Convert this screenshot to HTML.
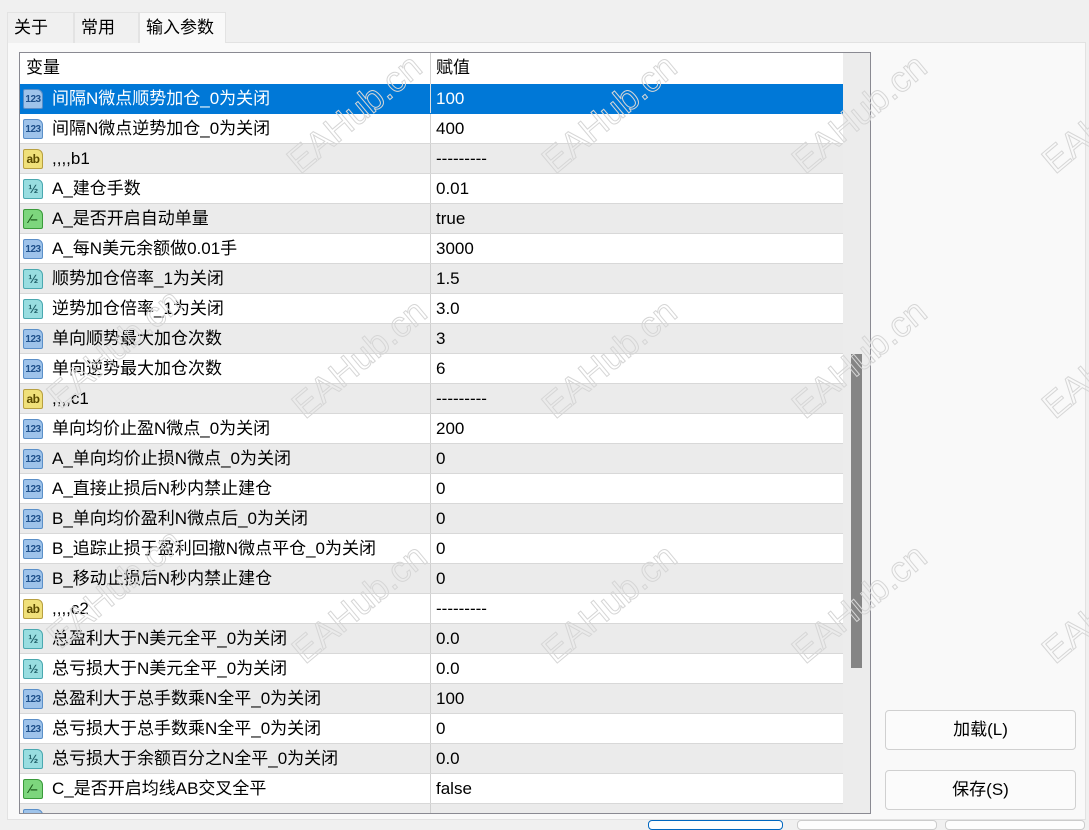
<!DOCTYPE html>
<html><head><meta charset="utf-8"><style>
*{margin:0;padding:0;box-sizing:border-box}
body{width:1089px;height:825px;background:#f0f0f0;font-family:"Liberation Sans","Noto Sans CJK SC",sans-serif;font-size:17px;color:#000;position:relative;overflow:hidden}
.tab{position:absolute;top:12px;height:31px;background:#f0f0f0;border:1px solid #e3e3e3;border-bottom:none;line-height:30px;padding-left:6px}
.panel{position:absolute;left:7px;top:42px;width:1079px;height:778px;background:#f9f9f9;border:1px solid #e2e2e2}
.list{position:absolute;left:19px;top:52px;width:852px;height:762px;border:1px solid #8a8a92;background:#fff;overflow:hidden}
.hdr{position:absolute;left:0;top:0;width:823px;height:31px;background:#fff}
.row{position:absolute;left:0;width:823px;height:30px;border-bottom:1px solid #d8d8d8}
.g{background:#ebebeb}.w{background:#fff}
.sel{background:#0078d7;color:#fff;border-bottom:1px solid #0078d7}
.n,.v{position:absolute;top:4px;height:22px;line-height:22px;white-space:nowrap;display:block;overflow:visible}
.n{left:32px}.v{left:416px}
.div{position:absolute;left:410px;top:0;width:1px;height:100%;background:#d0d0d0}
.ic{position:absolute;left:3px;top:5px;width:20px;height:20px;border-radius:2px 6px 2px 2px;font:bold 10px/19px "Liberation Sans",sans-serif;text-align:center;letter-spacing:-0.5px}
.i1{background:#9ec3ea;border:1px solid #5a8fc8;color:#1d4f8a}
.i2{background:#f0e07a;border:1px solid #b8a040;color:#5a4a00;font-size:12px}
.i3{background:#98dde0;border:1px solid #4aa8b0;color:#1d5d66;font-size:12px}
.i4{background:#7dd67d;border:1px solid #3a9a3a;color:#1a5a1a;font-size:12px}
.sb{position:absolute;left:823px;top:0;width:27px;height:100%;background:#ececec}
.th{position:absolute;left:8px;top:301px;width:11px;height:314px;background:#858585}
.btn{position:absolute;left:885px;width:191px;height:40px;border:1px solid #d0d0d0;border-radius:4px;background:#fbfbfb;text-align:center;line-height:38px}
</style></head><body>
<div class="panel"></div>
<div class="tab" style="left:7px;width:67px">关于</div>
<div class="tab" style="left:74px;width:65px">常用</div>
<div class="tab" style="left:139px;width:87px;background:#f9f9f9;height:31px">输入参数</div>
<div class="list">
<div class="hdr"><span class="n" style="left:6px">变量</span><span class="v">赋值</span><div class="div"></div></div>
<div class="row sel" style="top:31px"><div class="ic i1">123</div><span class="n">间隔N微点顺势加仓_0为关闭</span><span class="v">100</span><div class="div" style="background:#e0e0e0"></div></div>
<div class="row w" style="top:61px"><div class="ic i1">123</div><span class="n">间隔N微点逆势加仓_0为关闭</span><span class="v">400</span><div class="div"></div></div>
<div class="row g" style="top:91px"><div class="ic i2">ab</div><span class="n">,,,,b1</span><span class="v">---------</span><div class="div"></div></div>
<div class="row w" style="top:121px"><div class="ic i3">½</div><span class="n">A_建仓手数</span><span class="v">0.01</span><div class="div"></div></div>
<div class="row g" style="top:151px"><div class="ic i4">⁄‒</div><span class="n">A_是否开启自动单量</span><span class="v">true</span><div class="div"></div></div>
<div class="row w" style="top:181px"><div class="ic i1">123</div><span class="n">A_每N美元余额做0.01手</span><span class="v">3000</span><div class="div"></div></div>
<div class="row g" style="top:211px"><div class="ic i3">½</div><span class="n">顺势加仓倍率_1为关闭</span><span class="v">1.5</span><div class="div"></div></div>
<div class="row w" style="top:241px"><div class="ic i3">½</div><span class="n">逆势加仓倍率_1为关闭</span><span class="v">3.0</span><div class="div"></div></div>
<div class="row g" style="top:271px"><div class="ic i1">123</div><span class="n">单向顺势最大加仓次数</span><span class="v">3</span><div class="div"></div></div>
<div class="row w" style="top:301px"><div class="ic i1">123</div><span class="n">单向逆势最大加仓次数</span><span class="v">6</span><div class="div"></div></div>
<div class="row g" style="top:331px"><div class="ic i2">ab</div><span class="n">,,,,c1</span><span class="v">---------</span><div class="div"></div></div>
<div class="row w" style="top:361px"><div class="ic i1">123</div><span class="n">单向均价止盈N微点_0为关闭</span><span class="v">200</span><div class="div"></div></div>
<div class="row g" style="top:391px"><div class="ic i1">123</div><span class="n">A_单向均价止损N微点_0为关闭</span><span class="v">0</span><div class="div"></div></div>
<div class="row w" style="top:421px"><div class="ic i1">123</div><span class="n">A_直接止损后N秒内禁止建仓</span><span class="v">0</span><div class="div"></div></div>
<div class="row g" style="top:451px"><div class="ic i1">123</div><span class="n">B_单向均价盈利N微点后_0为关闭</span><span class="v">0</span><div class="div"></div></div>
<div class="row w" style="top:481px"><div class="ic i1">123</div><span class="n">B_追踪止损于盈利回撤N微点平仓_0为关闭</span><span class="v">0</span><div class="div"></div></div>
<div class="row g" style="top:511px"><div class="ic i1">123</div><span class="n">B_移动止损后N秒内禁止建仓</span><span class="v">0</span><div class="div"></div></div>
<div class="row w" style="top:541px"><div class="ic i2">ab</div><span class="n">,,,,c2</span><span class="v">---------</span><div class="div"></div></div>
<div class="row g" style="top:571px"><div class="ic i3">½</div><span class="n">总盈利大于N美元全平_0为关闭</span><span class="v">0.0</span><div class="div"></div></div>
<div class="row w" style="top:601px"><div class="ic i3">½</div><span class="n">总亏损大于N美元全平_0为关闭</span><span class="v">0.0</span><div class="div"></div></div>
<div class="row g" style="top:631px"><div class="ic i1">123</div><span class="n">总盈利大于总手数乘N全平_0为关闭</span><span class="v">100</span><div class="div"></div></div>
<div class="row w" style="top:661px"><div class="ic i1">123</div><span class="n">总亏损大于总手数乘N全平_0为关闭</span><span class="v">0</span><div class="div"></div></div>
<div class="row g" style="top:691px"><div class="ic i3">½</div><span class="n">总亏损大于余额百分之N全平_0为关闭</span><span class="v">0.0</span><div class="div"></div></div>
<div class="row w" style="top:721px"><div class="ic i4">⁄‒</div><span class="n">C_是否开启均线AB交叉全平</span><span class="v">false</span><div class="div"></div></div>
<div class="row g" style="top:751px"><div class="ic i1">123</div><div class="div"></div></div>
<div class="sb"><div class="th"></div></div>
</div>
<div class="btn" style="top:710px">加载(L)</div>
<div class="btn" style="top:770px">保存(S)</div>
<div style="position:absolute;left:648px;top:820px;width:135px;height:10px;border:1px solid #0067c0;border-radius:4px;background:#fdfdfd"></div>
<div style="position:absolute;left:797px;top:820px;width:140px;height:10px;border:1px solid #ccc;border-radius:4px;background:#fdfdfd"></div>
<div style="position:absolute;left:945px;top:820px;width:140px;height:10px;border:1px solid #ccc;border-radius:4px;background:#fdfdfd"></div>
<svg width="1089" height="825" style="position:absolute;left:0;top:0;pointer-events:none" font-family="Liberation Sans,sans-serif" font-size="36" fill="none" stroke="#d6d6d6" stroke-width="1">
<g transform="translate(300,175) rotate(-40)"><text>EAHub.cn</text></g>
<g transform="translate(555,175) rotate(-40)"><text>EAHub.cn</text></g>
<g transform="translate(805,175) rotate(-40)"><text>EAHub.cn</text></g>
<g transform="translate(1055,175) rotate(-40)"><text>EAHub.cn</text></g>
<g transform="translate(60,410) rotate(-40)"><text>EAHub.cn</text></g>
<g transform="translate(305,420) rotate(-40)"><text>EAHub.cn</text></g>
<g transform="translate(555,420) rotate(-40)"><text>EAHub.cn</text></g>
<g transform="translate(805,420) rotate(-40)"><text>EAHub.cn</text></g>
<g transform="translate(1055,420) rotate(-40)"><text>EAHub.cn</text></g>
<g transform="translate(60,650) rotate(-40)"><text>EAHub.cn</text></g>
<g transform="translate(305,665) rotate(-40)"><text>EAHub.cn</text></g>
<g transform="translate(555,665) rotate(-40)"><text>EAHub.cn</text></g>
<g transform="translate(805,665) rotate(-40)"><text>EAHub.cn</text></g>
<g transform="translate(1055,665) rotate(-40)"><text>EAHub.cn</text></g>
</svg>
</body></html>
